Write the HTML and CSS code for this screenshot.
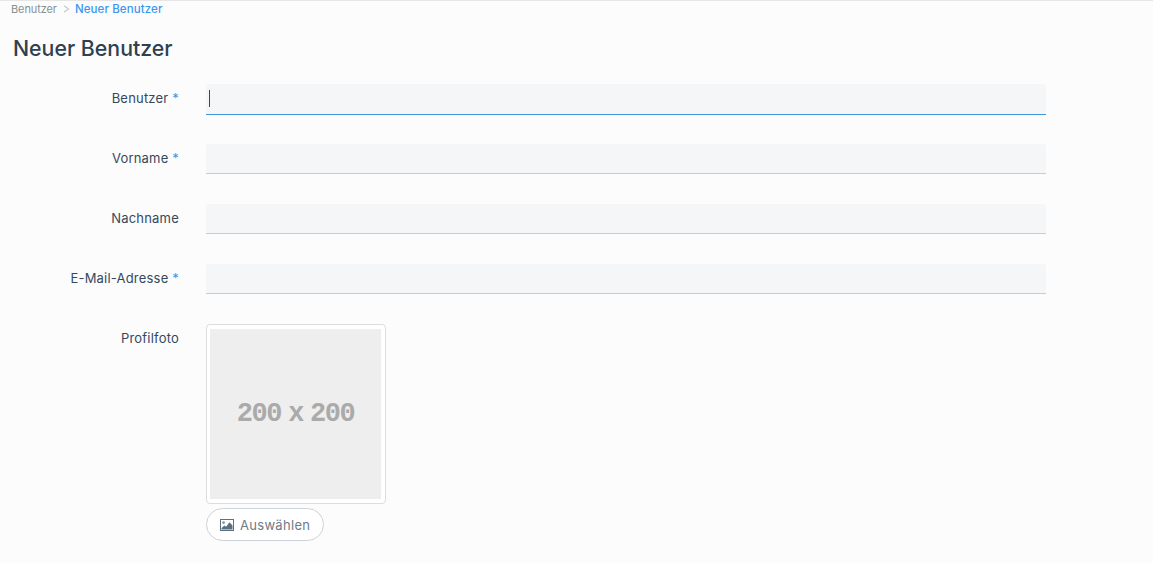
FILE: index.html
```html
<!DOCTYPE html>
<html lang="de">
<head>
    <meta charset="UTF-8">
    <meta name="viewport" content="width=device-width, initial-scale=1.0">
    <title>Neuer Benutzer</title>
    <link rel="stylesheet" href="styles.css">
</head>
<body>
    <div class="breadcrumb">
        <span class="crumb">Benutzer</span>
        <svg class="crumb-sep" width="7" height="8" viewBox="0 0 7 8"><path d="M1 .8 5.6 4 1 7.2" fill="none" stroke="#c4c8cc" stroke-width="1.1"/></svg>
        <span class="crumb-active">Neuer Benutzer</span>
    </div>
    <h1 class="page-title">Neuer Benutzer</h1>
    <form class="user-form">
        <div class="form-row first-row">
            <label class="form-label" for="user">Benutzer <span class="req">*</span></label>
            <div class="input-wrap"><input class="form-input is-focused" type="text" id="user"><span class="caret"></span></div>
        </div>
        <div class="form-row">
            <label class="form-label" for="first">Vorname <span class="req">*</span></label>
            <div class="input-wrap"><input class="form-input" type="text" id="first"></div>
        </div>
        <div class="form-row">
            <label class="form-label" for="last">Nachname</label>
            <div class="input-wrap"><input class="form-input" type="text" id="last"></div>
        </div>
        <div class="form-row">
            <label class="form-label" for="mail">E-Mail-Adresse <span class="req">*</span></label>
            <div class="input-wrap"><input class="form-input" type="text" id="mail"></div>
        </div>
        <div class="form-row photo-row">
            <div class="form-label">Profilfoto</div>
            <div class="photo-col">
                <div class="thumbnail">
                    <div class="placeholder">200 x 200</div>
                </div>
                <button class="select-btn" type="button">
                    <svg width="14" height="12" viewBox="0 0 14 12"><rect x=".5" y=".5" width="13" height="11" fill="#fff" stroke="#5c7080"/><circle cx="3.6" cy="3.6" r="1.4" fill="#7f93a3"/><path d="M1.5 10.5V9l3-2.5 1.6 1.3L9.5 3.2l3 3.3v4z" fill="#5c7080"/></svg>
                    Auswählen
                </button>
            </div>
        </div>
    </form>
</body>
</html>
```

FILE: styles.css
```css
body {
    margin: 0;
    height: 563px;
    overflow: hidden;
    box-sizing: border-box;
    border-top: 1px solid #e6e6e6;
    background-color: #fcfcfc;
    color: #34495e;
    font-family: Inter, "Open Sans", sans-serif;
    font-size: 13px;
    letter-spacing: 0.2px;
}
.breadcrumb {
    display: flex;
    align-items: center;
    height: 16px;
    padding-left: 11px;
    font-size: 11px;
    letter-spacing: 0;
}
.crumb {
    color: #8a8f94;
    letter-spacing: -0.1px;
}
.crumb-sep {
    margin: 0 5px 0 6px;
}
.crumb-active {
    color: #3b97f0;
    font-size: 11.5px;
    font-weight: 500;
    letter-spacing: 0.1px;
}
.page-title {
    margin: 16px 0 21px 13px;
    font-size: 21.3px;
    line-height: 30px;
    font-weight: 500;
    letter-spacing: 0;
    color: #2f4050;
}
.form-row {
    display: flex;
    margin-bottom: 30px;
}
.first-row {
    margin-bottom: 29px;
}
.form-label {
    box-sizing: border-box;
    width: 179px;
    padding-top: 5px;
    text-align: right;
    line-height: 18px;
}
.req {
    color: #3b97f0;
}
.input-wrap {
    position: relative;
    margin-left: 27px;
}
.form-input {
    display: block;
    box-sizing: border-box;
    width: 840px;
    height: 30px;
    padding: 0 3px;
    border: 0;
    border-bottom: 1px solid #c3ced8;
    border-radius: 3px 3px 0 0;
    background-color: #f5f6f8;
    outline: none;
}
.form-input.is-focused {
    height: 31px;
    border-bottom-color: #3f96d8;
}
.caret {
    position: absolute;
    left: 3px;
    top: 6px;
    width: 1px;
    height: 17px;
    background-color: #34495e;
}
.photo-row {
    margin-bottom: 0;
}
.photo-col {
    margin-left: 27px;
}
.thumbnail {
    box-sizing: border-box;
    width: 180px;
    height: 180px;
    padding: 4px 4px 4px 3px;
    border: 1px solid #ddd;
    border-radius: 4px;
    background-color: #fff;
}
.placeholder {
    display: flex;
    align-items: center;
    justify-content: center;
    height: 170px;
    background-color: #eee;
    color: #aaa;
    font-family: "Liberation Mono", monospace;
    font-size: 27px;
    font-weight: 700;
    letter-spacing: -1.5px;
    word-spacing: -7.5px;
}
.select-btn {
    display: flex;
    align-items: center;
    gap: 6px;
    box-sizing: border-box;
    width: 118px;
    height: 33px;
    margin-top: 4px;
    padding: 0 0 0 13px;
    border: 1px solid #ccd2d8;
    border-radius: 17px;
    background-color: #fff;
    color: #6f7a85;
    font-family: inherit;
    font-size: 13px;
    letter-spacing: 0.3px;
}
```
